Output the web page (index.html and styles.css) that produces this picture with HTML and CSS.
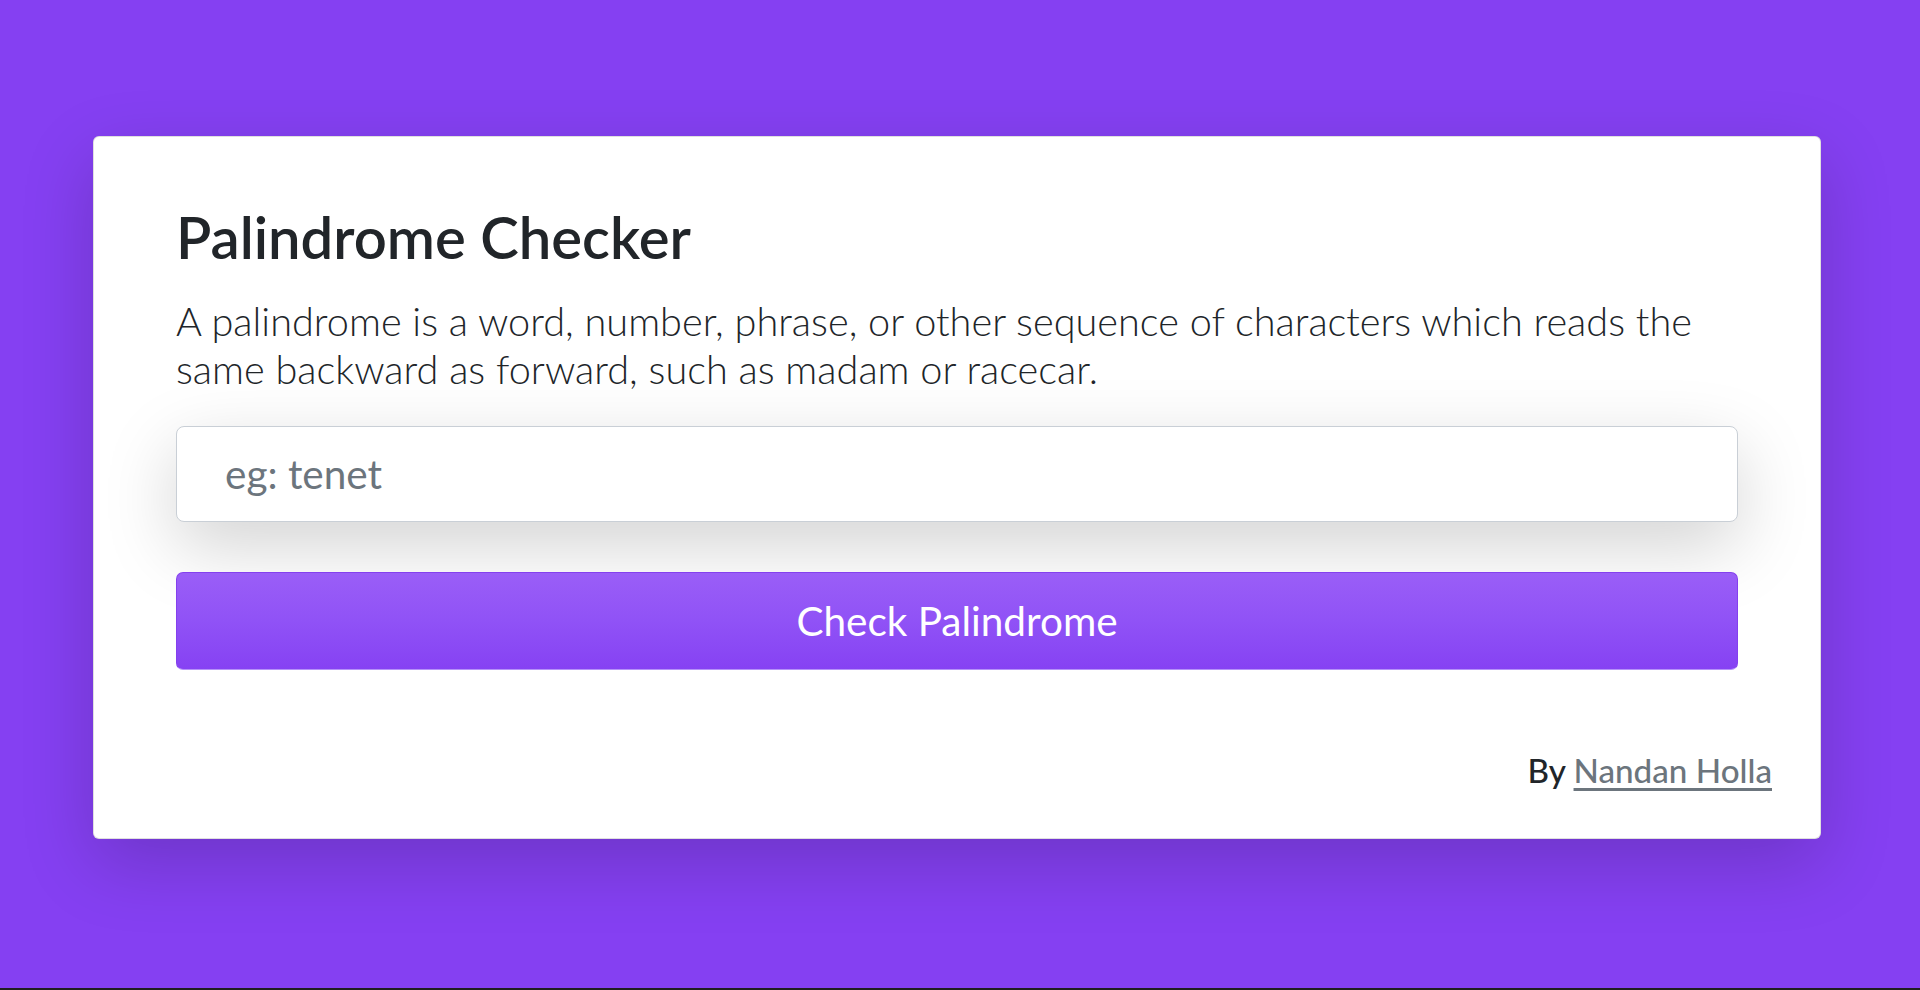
FILE: index.html
```html
<!DOCTYPE html>
<html lang="en">
<head>
<meta charset="utf-8">
<title>Palindrome Checker</title>
<link rel="stylesheet" href="styles.css">
</head>
<body>
<main class="page">
  <section class="card">
    <div class="card-body">
      <h1 class="title">Palindrome Checker</h1>
      <p class="lead">A palindrome is a word, number, phrase, or other sequence of characters which reads the same backward as forward, such as madam or racecar.</p>
      <input class="field" type="text" placeholder="eg: tenet">
      <button class="btn" type="button">Check Palindrome</button>
    </div>
    <footer class="credit">By <a href="#" class="credit-link">Nandan Holla</a></footer>
  </section>
</main>
</body>
</html>
```

FILE: styles.css
```css
html {
  background: #1f1f1f;
}
body {
  margin: 0;
  height: 988px;
  background: #8540f2;
  font-family: "Lato", "Segoe UI", sans-serif;
  color: #212529;
  overflow: hidden;
}
.page {
  padding: 136px 0 0 93px;
}
.card {
  box-sizing: border-box;
  width: 1728px;
  background: #fff;
  border: 1px solid rgba(0, 0, 0, 0.125);
  border-radius: 6px;
  box-shadow: 0 24px 72px rgba(0, 0, 0, 0.175);
}
.card-body {
  padding: 65px 82px 0;
  display: flex;
  flex-direction: column;
}
.title {
  margin: 0 0 25px;
  font-size: 58px;
  line-height: 1.2;
  font-weight: 600;
  color: #212529;
}
.lead {
  margin: 0 0 33px;
  font-size: 39.7px;
  line-height: 48px;
  font-weight: 300;
  color: #212529;
}
.field {
  box-sizing: border-box;
  width: 100%;
  height: 96px;
  margin: 0 0 50px;
  padding: 0 20px 0 48px;
  border: 1px solid #c9cfd6;
  border-radius: 8px;
  background: #fff;
  font-family: inherit;
  font-size: 40.5px;
  color: #495057;
  box-shadow: 0 24px 72px rgba(0, 0, 0, 0.175);
  outline: none;
}
.field::placeholder {
  color: #6c757d;
  opacity: 1;
}
.btn {
  box-sizing: border-box;
  width: 100%;
  height: 98px;
  margin: 0;
  padding: 0;
  border: 1px solid #8440ee;
  border-bottom-color: #b592f8;
  border-radius: 7px;
  background: linear-gradient(180deg, #9a5ef7 0%, #9052f6 50%, #8642f3 100%);
  color: #fff;
  font-family: inherit;
  font-size: 40.5px;
  font-weight: 400;
  cursor: pointer;
}
.credit {
  padding: 76px 48px 43px;
  text-align: right;
  font-size: 33.2px;
  line-height: 1.5;
  font-weight: 500;
  color: #212529;
}
.credit-link {
  color: #6c757d;
  text-decoration: underline;
  text-decoration-thickness: 3px;
  text-underline-offset: 5px;
}
```
